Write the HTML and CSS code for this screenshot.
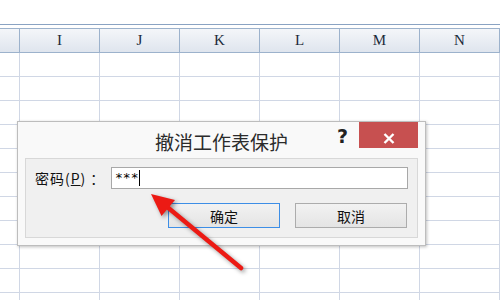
FILE: index.html
```html
<html>
  <head>
    <title>撤消工作表保护</title>
    <link rel="stylesheet" href="styles.css">
  </head>
  <body>
    <div id="folha">
      <div class="topo"></div>
      <div class="grade">
        <div class="cab canto"></div>
        <div class="cab">I</div>
        <div class="cab">J</div>
        <div class="cab">K</div>
        <div class="cab">L</div>
        <div class="cab">M</div>
        <div class="cab">N</div>
        <div class="cab"></div>
      </div>
      <div class="grade linhas" id="linhas"></div>
    </div>

    <div id="dialogo">
      <div class="titulo">
        <span class="textoTitulo">撤消工作表保护</span>
        <span class="ajuda">?</span>
        <span class="fechar">
          <svg width="12" height="11" viewBox="0 0 12 11">
            <path d="M1.5 1 L10.5 10 M10.5 1 L1.5 10" stroke="#fff" stroke-width="2.4" fill="none"/>
          </svg>
        </span>
      </div>
      <div class="painel">
        <div class="linhaSenha">
          <label>密码(<u>P</u>)<span class="doisPontos">：</span></label>
          <div class="campo">***<span class="cursor"></span></div>
        </div>
        <div class="botoes">
          <button class="botao ok">确定</button>
          <button class="botao">取消</button>
        </div>
      </div>
    </div>

    <svg id="seta" width="500" height="300" viewBox="0 0 500 300">
      <g class="sombra">
        <line x1="241" y1="268" x2="166" y2="206" stroke="#ec1a14" stroke-width="4.5" stroke-linecap="round"/>
        <polygon points="151,194 161.5,216 175,200" fill="#ec1a14"/>
      </g>
    </svg>

    <script type="text/javascript">
      var linhas = document.getElementById("linhas");
      var html = "";
      for (var i = 0; i < 11; i++) {
        for (var j = 0; j < 8; j++) {
          html += i == 10 ? '<div class="cel fim"></div>' : '<div class="cel"></div>';
        }
      }
      linhas.innerHTML = html;
    </script>
  </body>
</html>
```

FILE: styles.css
```css
* {
  margin: 0;
  padding: 0;
  box-sizing: border-box;
}

body {
  width: 500px;
  height: 300px;
  overflow: hidden;
  background: #fff;
  font-family: "Noto Sans CJK SC", "DejaVu Sans", sans-serif;
  position: relative;
}

#folha .topo {
  height: 28px;
  border-top: 1px solid #fff;
  background: #fff;
}

#folha .topo::after {
  content: "";
  display: block;
  margin-top: 23px;
  height: 1px;
  background: #8aa3c3;
}

.grade {
  display: grid;
  grid-template-columns: 19px repeat(6, 80px) 1px;
}

.cab {
  height: 25px;
  border-top: 1px solid #9cb2cc;
  border-bottom: 1px solid #9cb2cc;
  border-left: 1px solid #9cb2cc;
  background: linear-gradient(#f4f6f9, #dfe5ee);
  font-family: "Liberation Serif", "DejaVu Serif", serif;
  font-size: 15px;
  color: #1c2a3a;
  text-align: center;
  line-height: 23px;
}

.cab.canto {
  border-left: none;
}

.cel {
  height: 24px;
  border-bottom: 1px solid #d0d7e5;
  border-left: 1px solid #d0d7e5;
}

.cel.fim {
  height: 7px;
  border-bottom: none;
}

.cel:nth-child(8n+1) {
  border-left: none;
}

#dialogo {
  position: absolute;
  left: 17px;
  top: 121px;
  width: 409px;
  height: 125px;
  background: #f9f9f9;
  border: 1px solid #bdbdbd;
  box-shadow: 1px 1px 3px rgba(0, 0, 0, 0.25);
  padding: 0 7px 7px 7px;
  display: flex;
  flex-direction: column;
}

.titulo {
  height: 36px;
  position: relative;
  text-align: center;
}

.textoTitulo {
  display: block;
  font-size: 19px;
  line-height: 40px;
  color: #2b2b2b;
}

.ajuda {
  position: absolute;
  left: 312px;
  top: 3px;
  font-family: "DejaVu Sans", sans-serif;
  font-weight: bold;
  font-size: 19px;
  color: #222;
}

.fechar {
  position: absolute;
  right: 0;
  top: 0;
  width: 59px;
  height: 26px;
  background: #c75050;
  display: flex;
  justify-content: center;
  padding-top: 11px;
}

.painel {
  flex: 1;
  background: #f0f0f0;
  border: 1px solid #d8d8d8;
  padding: 8px 9px 8px 9px;
}

.linhaSenha {
  display: flex;
  align-items: center;
  height: 22px;
}

.linhaSenha label {
  width: 76px;
  font-size: 14px;
  letter-spacing: 1px;
  color: #111;
  white-space: nowrap;
}

.linhaSenha u {
  text-decoration: underline;
}

.doisPontos {
  margin-left: 4px;
}

.campo {
  flex: 1;
  height: 22px;
  background: #fff;
  border: 1px solid #a8a8a8;
  font-family: "DejaVu Sans Mono", monospace;
  font-size: 13px;
  line-height: 20px;
  padding-left: 3px;
  color: #000;
  display: flex;
  align-items: center;
}

.cursor {
  display: inline-block;
  width: 1px;
  height: 16px;
  background: #000;
  margin-left: 1px;
}

.botoes {
  display: flex;
  justify-content: flex-end;
  gap: 15px;
  margin-top: 14px;
  padding-right: 1px;
}

.botao {
  width: 112px;
  height: 25px;
  border: 1px solid #acacac;
  background: linear-gradient(#f2f2f2, #e4e4e4);
  font-family: "Noto Sans CJK SC", sans-serif;
  font-size: 14px;
  color: #111;
}

.botao.ok {
  border-color: #3d8ee6;
}

#seta {
  position: absolute;
  left: 0;
  top: 0;
}

.sombra {
  filter: drop-shadow(2px 2px 2px rgba(0, 0, 0, 0.4));
}
```
